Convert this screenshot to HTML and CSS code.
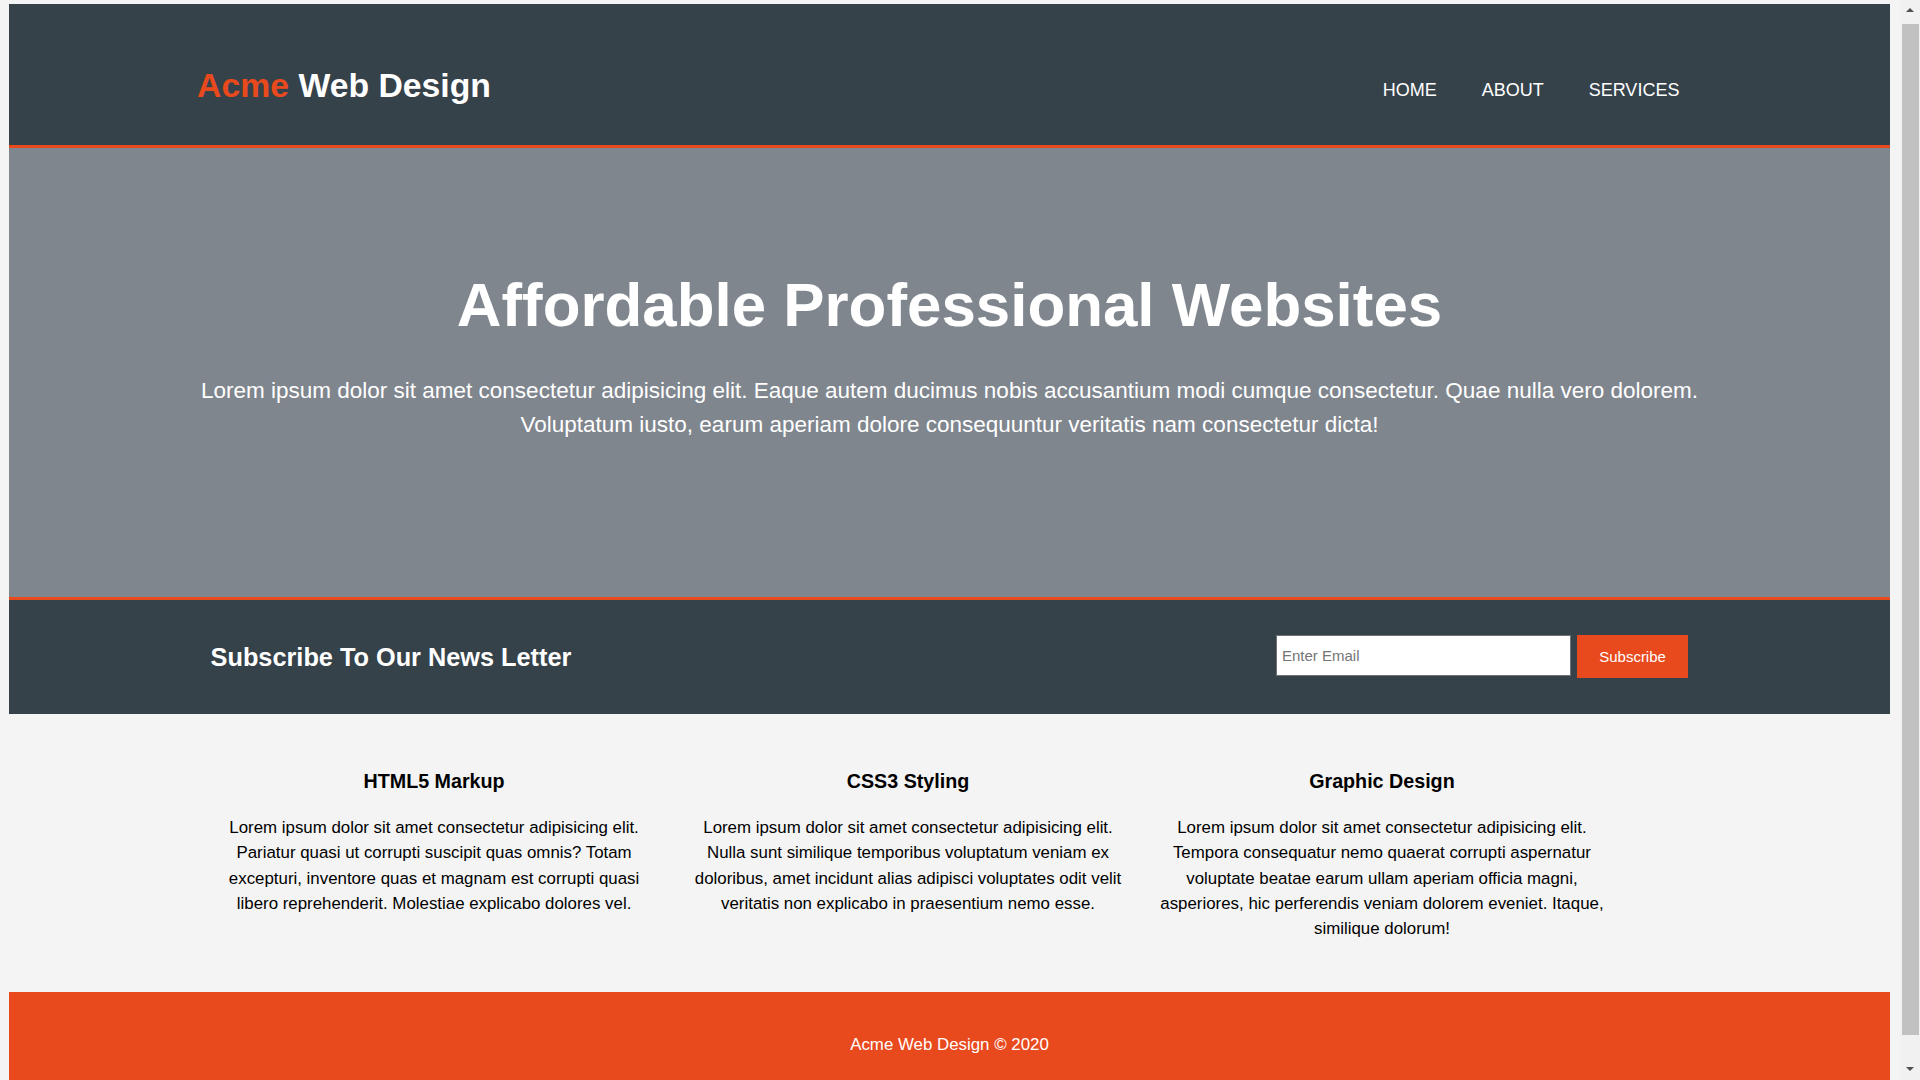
FILE: index.html
```html
<!DOCTYPE html>
<html lang="en">
<head>
<meta charset="utf-8">
<title>Acme Web Design | Welcome</title>
<link rel="stylesheet" href="styles.css">
</head>
<body>
<header class="site-header">
  <div class="container header-inner">
    <div class="branding">
      <h1 class="logo"><span class="highlight">Acme</span> Web Design</h1>
    </div>
    <nav class="main-nav">
      <ul class="nav-list">
        <li class="nav-item"><a href="#" class="nav-link">Home</a></li>
        <li class="nav-item"><a href="#" class="nav-link">About</a></li>
        <li class="nav-item"><a href="#" class="nav-link">Services</a></li>
      </ul>
    </nav>
  </div>
</header>

<section class="showcase">
  <div class="container">
    <h1 class="showcase-title">Affordable Professional Websites</h1>
    <p class="showcase-text">Lorem ipsum dolor sit amet consectetur adipisicing elit. Eaque autem ducimus nobis accusantium modi cumque consectetur. Quae nulla vero dolorem. Voluptatum iusto, earum aperiam dolore consequuntur veritatis nam consectetur dicta!</p>
  </div>
</section>

<section class="newsletter">
  <div class="container newsletter-inner">
    <h2 class="newsletter-title">Subscribe To Our News Letter</h2>
    <form class="newsletter-form">
      <input type="email" class="email-input" placeholder="Enter Email">
      <button type="submit" class="button-1">Subscribe</button>
    </form>
  </div>
</section>

<section class="boxes">
  <div class="container boxes-inner">
    <div class="box">
      <h3 class="box-title">HTML5 Markup</h3>
      <p class="box-text">Lorem ipsum dolor sit amet consectetur adipisicing elit. Pariatur quasi ut corrupti suscipit quas omnis? Totam excepturi, inventore quas et magnam est corrupti quasi libero reprehenderit. Molestiae explicabo dolores vel.</p>
    </div>
    <div class="box">
      <h3 class="box-title">CSS3 Styling</h3>
      <p class="box-text">Lorem ipsum dolor sit amet consectetur adipisicing elit. Nulla sunt similique temporibus voluptatum veniam ex doloribus, amet incidunt alias adipisci voluptates odit velit veritatis non explicabo in praesentium nemo esse.</p>
    </div>
    <div class="box">
      <h3 class="box-title">Graphic Design</h3>
      <p class="box-text">Lorem ipsum dolor sit amet consectetur adipisicing elit. Tempora consequatur nemo quaerat corrupti aspernatur voluptate beatae earum ullam aperiam officia magni, asperiores, hic perferendis veniam dolorem eveniet. Itaque, similique dolorum!</p>
    </div>
  </div>
</section>

<footer class="site-footer">
  <p class="footer-text">Acme Web Design &copy; 2020</p>
</footer>

<div class="scrollbar" aria-hidden="true">
  <span class="scroll-arrow scroll-arrow-up"></span>
  <span class="scroll-thumb"></span>
  <span class="scroll-arrow scroll-arrow-down"></span>
</div>
</body>
</html>
```

FILE: styles.css
```css
html {
  background-color: #f4f4f4;
}

body {
  margin: 4px 30px 9px 9px;
  padding: 0;
  font-family: "Liberation Sans", Arial, Helvetica, sans-serif;
  font-size: 16.875px;
  line-height: 1.5;
  background-color: #f4f4f4;
  color: #000000;
}

.container {
  width: 80%;
  margin: 0 auto;
}

/* Header */
.site-header {
  background: #35424a;
  color: #ffffff;
  padding: 33.75px 0 11.25px;
  border-bottom: 3px solid #e8491d;
}

.header-inner {
  display: flex;
  justify-content: space-between;
  align-items: flex-start;
}

.logo {
  margin: 22.6px 0;
  font-size: 33.75px;
  line-height: 1.5;
  font-weight: bold;
}

.highlight {
  color: #e8491d;
}

.main-nav {
  padding-top: 39px;
}

.nav-list {
  display: flex;
  margin: 0;
  padding: 0;
  list-style: none;
}

.nav-item {
  padding: 0 22.5px;
  line-height: 27px;
}

.nav-link {
  color: #ffffff;
  text-decoration: none;
  text-transform: uppercase;
  font-size: 18px;
}

/* Showcase */
.showcase {
  min-height: 449px;
  background: #7f868e;
  color: #ffffff;
  text-align: center;
  border-bottom: 3px solid #e8491d;
  overflow: hidden;
}

.showcase-title {
  margin: 111px 0 11.25px;
  font-size: 61.875px;
  line-height: 1.5;
}

.showcase-text {
  margin: 22.5px 0;
  font-size: 22.5px;
  line-height: 1.5;
}

/* Newsletter */
.newsletter {
  padding: 16.875px;
  background: #35424a;
  color: #ffffff;
}

.newsletter-inner {
  display: flex;
  justify-content: space-between;
  align-items: flex-start;
}

.newsletter-title {
  margin: 22px 0 20px;
  font-size: 25.3px;
  line-height: 1.5;
}

.newsletter-form {
  display: flex;
  align-items: flex-start;
  gap: 6px;
  margin-top: 18.5px;
}

.email-input {
  box-sizing: content-box;
  width: 283.25px;
  height: 30.125px;
  padding: 4.5px;
  margin: 0;
  border: 1px solid #6f7377;
  background: #ffffff;
  font-family: "Liberation Sans", Arial, sans-serif;
  font-size: 15px;
  color: #000000;
}

.email-input::placeholder {
  color: #757575;
}

.button-1 {
  height: 42.75px;
  margin: 0;
  padding: 0 22.5px;
  border: 0;
  background: #e8491d;
  color: #ffffff;
  font-family: "Liberation Sans", Arial, sans-serif;
  font-size: 15px;
}

/* Boxes */
.boxes {
  margin-top: 22.5px;
}

.boxes-inner {
  display: flex;
  justify-content: flex-start;
}

.box {
  box-sizing: content-box;
  width: 30%;
  padding: 11.25px;
  text-align: center;
}

.box-title {
  margin: 19.7px 0 18.7px;
  font-size: 19.7px;
  line-height: 1.5;
}

.box-text {
  margin: 0 0 16.875px;
}

/* Footer */
.site-footer {
  margin-top: 22.5px;
  padding: 22.5px;
  background-color: #e8491d;
  color: #ffffff;
  text-align: center;
}

.footer-text {
  margin: 16.875px 0;
}

/* Browser scrollbar (overlaid at the window's right edge) */
.scrollbar {
  position: fixed;
  top: 0;
  right: 0;
  bottom: 0;
  width: 20px;
  background: #f1f1f1;
  display: flex;
  flex-direction: column;
  align-items: center;
}

.scroll-arrow {
  width: 0;
  height: 0;
  border-left: 4px solid transparent;
  border-right: 4px solid transparent;
}

.scroll-arrow-up {
  margin-top: 8px;
  border-bottom: 4px solid #505050;
}

.scroll-thumb {
  width: 17px;
  margin-top: 12px;
  height: 1011px;
  background: #c1c1c1;
}

.scroll-arrow-down {
  margin-top: 32px;
  border-top: 4px solid #505050;
}
```
